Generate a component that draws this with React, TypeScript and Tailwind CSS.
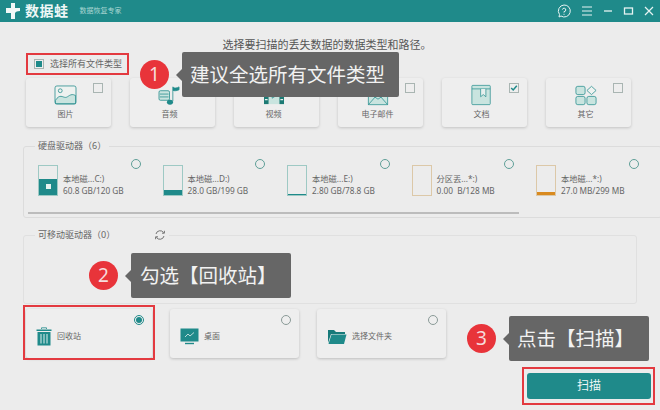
import type { ReactNode } from 'react';

const font = { fontFamily: '"Noto Sans", "Noto Sans CJK SC", sans-serif' };

const teal = '#1f8a8a';
const tint = '#c9e4df';

function PictureIcon() {
  return (
    <svg width="23" height="21" viewBox="0 0 24 22" fill="none">
      <rect x="1" y="1" width="22" height="19" rx="2" fill="#eef2f0" stroke={teal} strokeWidth="0.8" />
      <circle cx="6.5" cy="6" r="2" fill="none" stroke={teal} strokeWidth="0.8" />
      <path d="M1.5 16 C6 9 9 13 12 13 C15 13 17 8 22.5 11 V19.5 H1.5 Z" fill={tint} stroke={teal} strokeWidth="0.8" />
    </svg>
  );
}

function AudioIcon() {
  return (
    <svg width="23" height="21" viewBox="0 0 24 22" fill="none">
      <rect x="1" y="6" width="11" height="10" rx="1.5" fill={tint} stroke={teal} strokeWidth="0.8" />
      <path d="M2 9.5 H11 M2 12.5 H11" stroke={teal} strokeWidth="0.8" />
      <path d="M15.5 17 V2 C17 4 20 3 22 2 V5 C20 6 17 6.5 15.5 5.5" fill={teal} stroke={teal} strokeWidth="0.8" />
      <ellipse cx="12.5" cy="18" rx="3.2" ry="2.6" fill={teal} />
    </svg>
  );
}

function VideoIcon() {
  return (
    <svg width="22" height="20" viewBox="0 0 24 22" fill="none">
      <rect x="1" y="1" width="22" height="20" fill={tint} />
      <rect x="1" y="1" width="5" height="20" fill="#1c7a74" />
      <rect x="18" y="1" width="5" height="20" fill="#1c7a74" />
      <path d="M2 6 H5 M2 11 H5 M2 16 H5 M19 6 H22 M19 11 H22 M19 16 H22" stroke="#e8f0ee" strokeWidth="1.4" />
      <path d="M10 7.5 L15.5 11 L10 14.5 Z" fill="none" stroke={teal} strokeWidth="0.8" />
    </svg>
  );
}

function MailIcon() {
  return (
    <svg width="22" height="21" viewBox="0 0 24 22" fill="none">
      <path d="M1.5 8 L12 1 L22.5 8 V21 H1.5 Z" fill={tint} stroke={teal} strokeWidth="0.8" />
      <path d="M1.5 8 L12 15 L22.5 8 M1.5 21 L9 12.5 M22.5 21 L15 12.5" stroke={teal} strokeWidth="0.8" />
      <path d="M6 6 H18 M7 8.5 H17" stroke={teal} strokeWidth="0.8" />
    </svg>
  );
}

function DocIcon() {
  return (
    <svg width="21" height="22" viewBox="0 0 24 24" fill="none">
      <rect x="1" y="1" width="21" height="22" rx="1" fill={tint} stroke={teal} strokeWidth="0.8" />
      <path d="M1 5 H22" stroke={teal} strokeWidth="0.8" />
      <path d="M11 5 V14 L14 11.5 L17 14 V5" fill="#e8f0ee" stroke={teal} strokeWidth="0.8" />
    </svg>
  );
}

function OtherIcon() {
  return (
    <svg width="22" height="21" viewBox="0 0 24 22" fill="none">
      <rect x="1" y="1" width="10" height="9" rx="2" fill={tint} stroke={teal} strokeWidth="0.8" />
      <rect x="1" y="12" width="10" height="9" rx="2" fill={tint} stroke={teal} strokeWidth="0.8" />
      <rect x="13" y="12" width="10" height="9" rx="2" fill={tint} stroke={teal} strokeWidth="0.8" />
      <path d="M18 1 L23 5.5 L18 10 L13 5.5 Z" fill="#eef2f0" stroke={teal} strokeWidth="0.8" />
    </svg>
  );
}

function TrashIcon() {
  return (
    <svg width="16" height="19" viewBox="0 0 16 19" fill="none">
      <path d="M5.5 2 V0.8 H10.5 V2" stroke={teal} strokeWidth="0.8" />
      <path d="M0.5 2.5 H15.5 V4 H0.5 Z" fill={teal} />
      <path d="M1.5 5 H14.5 V18.5 H1.5 Z" fill={teal} />
      <path d="M5 7 V16.5 M8 7 V16.5 M11 7 V16.5" stroke="#dff0ee" strokeWidth="1" />
    </svg>
  );
}

function DesktopIcon() {
  return (
    <svg width="19" height="17" viewBox="0 0 19 17" fill="none">
      <rect x="0.5" y="0.5" width="18" height="13" fill={teal} />
      <path d="M5 9 L8 6 L10 8 L14 4.5" stroke="#dff0ee" strokeWidth="0.8" />
      <path d="M5 15.5 H14" stroke={teal} strokeWidth="1.4" />
    </svg>
  );
}

function FolderIcon() {
  return (
    <svg width="20" height="17" viewBox="0 0 20 17" fill="none">
      <path d="M1 2 H7 L9 4 H18 V6 H4 L1 15 Z" fill="#177a7a" />
      <path d="M4.5 6.5 H19.5 L17 16 H1.5 Z" fill={teal} />
    </svg>
  );
}

function Check({ state, className }: { state: 'off' | 'on' | 'tick'; className?: string }) {
  return (
    <span className={`flex size-[10px] items-center justify-center border border-[#a9b5b2] bg-[#eeeeee] ${className ?? ''}`}>
      {state === 'on' && <span className="size-[6px] bg-[#1f8a8a]" />}
      {state === 'tick' && (
        <svg width="8" height="8" viewBox="0 0 8 8" fill="none">
          <path d="M1.2 4 L3.2 6 L6.8 1.8" stroke={teal} strokeWidth="1.5" />
        </svg>
      )}
    </span>
  );
}

function TypeCard({ label, icon, check = 'off' }: { label: string; icon: ReactNode; check?: 'off' | 'tick' }) {
  return (
    <div className="relative flex h-[49px] w-[85px] flex-col items-center rounded-[3px] bg-[#eeeeee] pt-[6px] pr-[6px] shadow-[0_1px_3px_rgba(0,0,0,0.18)]">
      <div className="flex h-[22px] items-center">{icon}</div>
      <div className="mt-[2px] text-[8px] leading-[12px] text-[#666]">{label}</div>
      <Check state={check} className="absolute top-[5px] right-[8px]" />
    </div>
  );
}

function Drive({ name, size, used, color, light, logo }: { name: string; size: string; used: number; color: string; light: string; logo?: boolean }) {
  return (
    <div className="relative flex w-[124.5px] shrink-0 items-center">
      <div className="relative flex h-[31px] w-[20px] shrink-0 flex-col justify-end border" style={{ borderColor: light }}>
        <div className="flex items-center justify-center" style={{ height: used, backgroundColor: color }}>
          {logo && <span className="size-[5px] bg-[#e6f2f0]" />}
        </div>
      </div>
      <div className="mt-[10px] ml-[5px] whitespace-pre text-[8.25px] leading-[12px] text-[#666]">
        <div>{name}</div>
        <div>{size}</div>
      </div>
      <span className="absolute top-[-4px] right-[22px] size-[10px] rounded-full border border-[#5f9f98]" />
    </div>
  );
}

function PlaceCard({ label, icon, selected, width }: { label: string; icon: ReactNode; selected?: boolean; width: string }) {
  return (
    <div className={`relative flex h-[49px] items-center rounded-[3px] bg-[#eeeeee] pt-[5px] pl-[10px] shadow-[0_1px_3px_rgba(0,0,0,0.2)] ${width}`}>
      {icon}
      <span className="ml-[5px] text-[8px] text-[#666]">{label}</span>
      <span className={`absolute top-[6px] right-[8px] flex size-[10px] items-center justify-center rounded-full border ${selected ? 'border-[#1f8a8a]' : 'border-[#8a9a97]'}`}>
        {selected && <span className="size-[6px] rounded-full bg-[#1f8a8a]" />}
      </span>
    </div>
  );
}

function Callout({ n, text, className, bubble }: { n: string; text: string; className: string; bubble: string }) {
  return (
    <div className={`absolute flex items-center ${className}`}>
      <span className="flex size-[29px] items-center justify-center rounded-full bg-[#e8343a] text-[19px] text-[#f6dcdc]">{n}</span>
      <span className="ml-[7px] h-0 w-0 border-y-[6px] border-r-[6px] border-y-transparent border-r-[#666]" />
      <div className={`flex h-[45px] items-center rounded-[2px] bg-[#666] text-[19.5px] text-[#f2f2f2] ${bubble}`}>{text}</div>
    </div>
  );
}

export default function App() {
  return (
    <div className="relative h-[410px] w-[660px] overflow-hidden bg-[#ececec]" style={font}>
      <header className="flex h-[22px] items-center bg-[#1f8a8a] pr-[6px] pl-[5px]">
        <svg width="16" height="18" viewBox="0 0 16 18" fill="#f2f8f7">
          <path d="M6 1 H10 V6 H15 V9 Q11 9 10 11 V17 H6 V11 H1 V6 H6 Z" />
        </svg>
        <span className="ml-[4px] text-[14px] leading-none font-bold tracking-[0.5px] text-[#eef7f6]">数据蛙</span>
        <span className="ml-[11px] text-[7px] text-[#a9d6d2]">数据恢复专家</span>
        <div className="ml-auto flex items-center gap-[10px] text-[#e6f3f2]">
          <svg width="14" height="14" viewBox="0 0 14 14" fill="none" stroke="currentColor" strokeWidth="1">
            <path d="M7 1 A6 6 0 1 1 4 12 L2 13 L2.5 10.5 A6 6 0 0 1 7 1 Z" />
            <path d="M5.4 5.6 A1.7 1.7 0 1 1 7 7.6 V8.6 M7 9.8 V10.8" />
          </svg>
          <svg width="12" height="10" viewBox="0 0 12 10" stroke="currentColor" strokeWidth="1">
            <path d="M1 1 H11 M1 5 H11 M1 9 H11" />
          </svg>
          <svg width="10" height="10" viewBox="0 0 10 10" stroke="currentColor" strokeWidth="1.3">
            <path d="M1 5 H9" />
          </svg>
          <svg width="11" height="10" viewBox="0 0 11 10" fill="none" stroke="currentColor" strokeWidth="1.3">
            <rect x="1.5" y="2" width="8" height="6" />
          </svg>
          <svg width="10" height="10" viewBox="0 0 10 10" stroke="currentColor" strokeWidth="1.2">
            <path d="M1 1 L9 9 M9 1 L1 9" />
          </svg>
        </div>
      </header>

      <main className="pt-[16px] pl-[23px]">
        <div className="w-[608px] text-center text-[11px] leading-[14px] text-[#555]">
          选择要扫描的丢失数据的数据类型和路径。
        </div>

        <div className="mt-[5px] ml-[11px] flex h-[14px] items-center">
          <Check state="on" />
          <span className="ml-[6px] text-[9px] text-[#666]">选择所有文件类型</span>
        </div>

        <div className="mt-[7px] ml-[3px] flex w-[605px] justify-between">
          <TypeCard label="图片" icon={<PictureIcon />} />
          <TypeCard label="音频" icon={<AudioIcon />} />
          <TypeCard label="视频" icon={<VideoIcon />} />
          <TypeCard label="电子邮件" icon={<MailIcon />} />
          <TypeCard label="文档" icon={<DocIcon />} check="tick" />
          <TypeCard label="其它" icon={<OtherIcon />} />
        </div>

        <fieldset className="mt-[13px] h-[78px] w-[614px] overflow-hidden rounded-[3px] border border-[#dcdcdc]">
          <legend className="ml-[11px] px-[3px] text-[9px] leading-[12px] text-[#666]">硬盘驱动器（6）</legend>
          <div className="flex pt-[11px] pl-[14px]">
            <Drive name="本地磁...C:)" size="60.8 GB/120 GB" used={16} color={teal} light="#9ec9c4" logo />
            <Drive name="本地磁...D:)" size="28.0 GB/199 GB" used={5} color={teal} light="#9ec9c4" />
            <Drive name="本地磁...E:)" size="2.80 GB/78.8 GB" used={1} color={teal} light="#9ec9c4" />
            <Drive name="分区丢...*:)" size="0.00  B/128 MB" used={0} color="#d9b98a" light="#dcc8a8" />
            <Drive name="本地磁...*:)" size="27.0 MB/299 MB" used={3} color="#d98a1f" light="#dcc8a8" />
          </div>
          <div className="mt-[15px] ml-[4px] h-[2px] w-[491px] bg-[#bcbcbc]" />
        </fieldset>

        <fieldset className="relative mt-[11px] h-[75px] w-[614px] rounded-[3px] border border-[#e0e0e0]">
          <legend className="ml-[11px] flex items-center px-[3px] text-[9px] leading-[12px] text-[#666]">
            可移动驱动器（0）
            <svg className="ml-[39px]" width="12" height="12" viewBox="0 0 12 12" fill="none" stroke="#666" strokeWidth="0.9">
              <path d="M2 5 A4.2 4.2 0 0 1 9.6 3.6 M10 7 A4.2 4.2 0 0 1 2.4 8.4" />
              <path d="M10.4 1.8 V4.2 H8 M1.6 10.2 V7.8 H4" />
            </svg>
          </legend>
        </fieldset>

        <div className="mt-[5px] ml-[3px] flex gap-[18px]">
          <PlaceCard label="回收站" icon={<TrashIcon />} selected width="w-[126px]" />
          <PlaceCard label="桌面" icon={<DesktopIcon />} width="w-[129px]" />
          <PlaceCard label="选择文件夹" icon={<FolderIcon />} width="w-[129px]" />
        </div>

        <div className="mt-[15px] ml-[504px] flex h-[26px] w-[124px] items-center justify-center rounded-[3px] bg-[#1f8a8a] text-[12px] text-[#eef7f6]">
          扫描
        </div>
      </main>

      {/* annotations drawn over the screenshot */}
      <div className="absolute top-[53px] left-[26px] h-[22px] w-[103px] border-2 border-[#e33a40]" />
      <div className="absolute top-[305px] left-[23px] h-[55px] w-[132px] border-2 border-[#e33a40]" />
      <div className="absolute top-[367px] left-[522px] h-[38px] w-[133px] border-2 border-[#e33a40]" />

      <Callout n="1" text="建议全选所有文件类型" className="top-[52px] left-[140px]" bubble="w-[217px] pl-[8px]" />
      <Callout n="2" text="勾选【回收站】" className="top-[253px] left-[89px]" bubble="w-[160px] pl-[9px]" />
      <Callout n="3" text="点击【扫描】" className="top-[316px] left-[467px]" bubble="w-[140px] pl-[8px]" />
    </div>
  );
}
